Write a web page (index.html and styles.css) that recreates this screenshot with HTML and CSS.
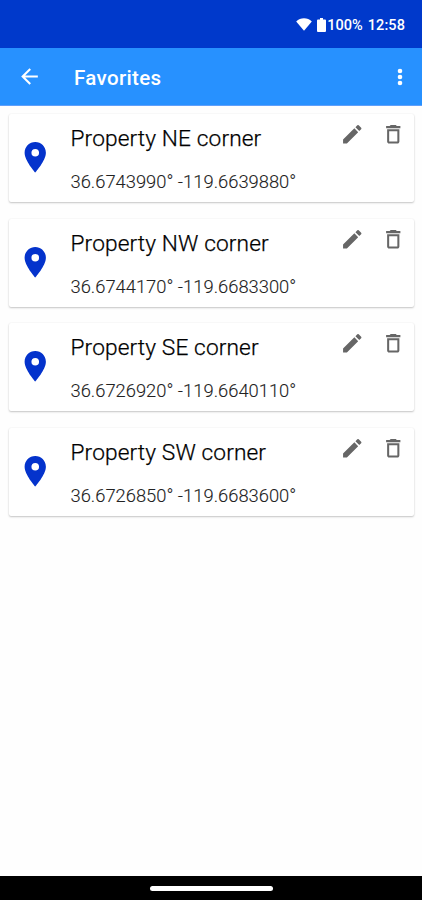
FILE: index.html
```
<!DOCTYPE html>
<html lang="en">
<head>
<meta charset="utf-8">
<title>Favorites</title>
<link rel="stylesheet" href="styles.css">
</head>
<body>
<svg class="defs" aria-hidden="true">
  <symbol id="pin" viewBox="0 0 24 24"><path d="M12 2C8.13 2 5 5.13 5 9c0 5.25 7 13 7 13s7-7.75 7-13c0-3.87-3.13-7-7-7zm0 9.5a2.5 2.5 0 1 1 0-5 2.5 2.5 0 0 1 0 5z"/></symbol>
  <symbol id="edit" viewBox="0 0 24 24"><path d="M3 17.25V21h3.75L17.81 9.94l-3.75-3.75L3 17.25zM20.71 7.04a1 1 0 0 0 0-1.41l-2.34-2.34a1 1 0 0 0-1.41 0l-1.83 1.83 3.75 3.75 1.83-1.83z"/></symbol>
  <symbol id="trash" viewBox="0 0 24 24"><path d="M6 19c0 1.1.9 2 2 2h8c1.100 0 2-.9 2-2V7H6v12zM8 9h8v10H8V9zm7.500-5l-1-1h-5l-1 1H5v2h14V4z"/></symbol>
</svg>
<header class="status">
  <svg class="wifi" viewBox="0 0 16 13"><path d="M8 12.800L.2 3.500C2.400 1.400 5 .3 8 .3s5.600 1.100 7.800 3.200z"/></svg>
  <svg class="battery" viewBox="0 0 9 14"><path d="M1 1.500h2V0h3v1.500h2a1 1 0 0 1 1 1V13a1 1 0 0 1-1 1H1a1 1 0 0 1-1-1V2.500a1 1 0 0 1 1-1z"/></svg>
  <span class="percent">100%</span>
  <span class="time">12:58</span>
</header>
<nav class="toolbar">
  <svg class="back" viewBox="0 0 24 24"><path d="M20 11H7.830l5.590-5.590L12 4l-8 8 8 8 1.410-1.410L7.830 13H20v-2z"/></svg>
  <h1 class="title">Favorites</h1>
  <svg class="more" viewBox="0 0 6 18"><circle cx="3" cy="3" r="2.300"/><circle cx="3" cy="9" r="2.300"/><circle cx="3" cy="15" r="2.300"/></svg>
</nav>
<main class="list">
  <article class="card">
    <svg class="pin"><use href="#pin"/></svg>
    <div class="info"><h2 class="name">Property NE corner</h2><p class="coords">36.6743990° -119.6639880°</p></div>
    <svg class="action"><use href="#edit"/></svg>
    <svg class="action"><use href="#trash"/></svg>
  </article>
  <article class="card">
    <svg class="pin"><use href="#pin"/></svg>
    <div class="info"><h2 class="name">Property NW corner</h2><p class="coords">36.6744170° -119.6683300°</p></div>
    <svg class="action"><use href="#edit"/></svg>
    <svg class="action"><use href="#trash"/></svg>
  </article>
  <article class="card">
    <svg class="pin"><use href="#pin"/></svg>
    <div class="info"><h2 class="name">Property SE corner</h2><p class="coords">36.6726920° -119.6640110°</p></div>
    <svg class="action"><use href="#edit"/></svg>
    <svg class="action"><use href="#trash"/></svg>
  </article>
  <article class="card">
    <svg class="pin"><use href="#pin"/></svg>
    <div class="info"><h2 class="name">Property SW corner</h2><p class="coords">36.6726850° -119.6683600°</p></div>
    <svg class="action"><use href="#edit"/></svg>
    <svg class="action"><use href="#trash"/></svg>
  </article>
</main>
<footer class="gesture"><div class="handle"></div></footer>
</body>
</html>
```
FILE: styles.css
```
* { box-sizing: border-box; }
body {
  margin: 0;
  height: 900px;
  display: flex;
  flex-direction: column;
  background: #fefefe;
  font-family: Roboto, sans-serif;
  overflow: hidden;
}
h1, h2, p { margin: 0; white-space: nowrap; }
svg { display: block; flex: none; fill: currentColor; }
.defs { display: none; }
.status {
  height: 48px;
  flex: none;
  display: flex;
  align-items: center;
  justify-content: flex-end;
  padding: 2px 17px 0 0;
  background: #0039cb;
  color: #fff;
  font-size: 14.500px;
  font-weight: 500;
}
.wifi { width: 16px; height: 13px; margin: 0 5px 2px 0; }
.battery { width: 9px; height: 14px; margin-right: 1px; }
.time { margin-left: 5px; letter-spacing: .1px; }
.toolbar {
  height: 58px;
  flex: none;
  display: flex;
  align-items: center;
  padding: 0 19px 0 17px;
  background: #2791ff;
  border-bottom: 1px solid #5f9ffb;
  color: #fff;
}
.back { width: 25px; height: 25px; }
.title {
  flex: 1;
  margin-left: 32px;
  padding-top: 2px;
  font-size: 20.500px;
  line-height: 24px;
  font-weight: 500;
  letter-spacing: .35px;
}
.more { width: 6px; height: 18px; }
.list {
  flex: 1;
  display: flex;
  flex-direction: column;
  gap: 16.500px;
  padding: 8px 8px 0 9px;
}
.card {
  height: 88px;
  flex: none;
  display: flex;
  align-items: flex-start;
  padding-right: 8px;
  background: #fff;
  border-radius: 2px;
  box-shadow: 0 1px 2px rgba(0, 0, 0, .22), 0 0 2px rgba(0, 0, 0, .06);
}
.pin { width: 36.500px; height: 36.500px; margin: 25px 0 0 8px; color: #0433cc; }
.info { flex: 1; margin-left: 17px; padding-top: 11px; }
.name { font-size: 22.700px; line-height: 28px; font-weight: 300; letter-spacing: .12px; color: #000; -webkit-text-stroke: .25px #000; }
.coords { margin-top: 18px; font-size: 18.350px; line-height: 22px; font-weight: 300; color: #222; -webkit-text-stroke: .1px #222; }
.action { width: 24.500px; height: 24.500px; margin: 8px 0 0 16.500px; color: #666; }
.action:last-child { margin-right: .700px; }
.gesture {
  height: 24px;
  flex: none;
  display: flex;
  justify-content: center;
  padding-top: 10px;
  background: #000;
}
.handle { width: 123px; height: 5px; border-radius: 3px; background: #fff; }
```
